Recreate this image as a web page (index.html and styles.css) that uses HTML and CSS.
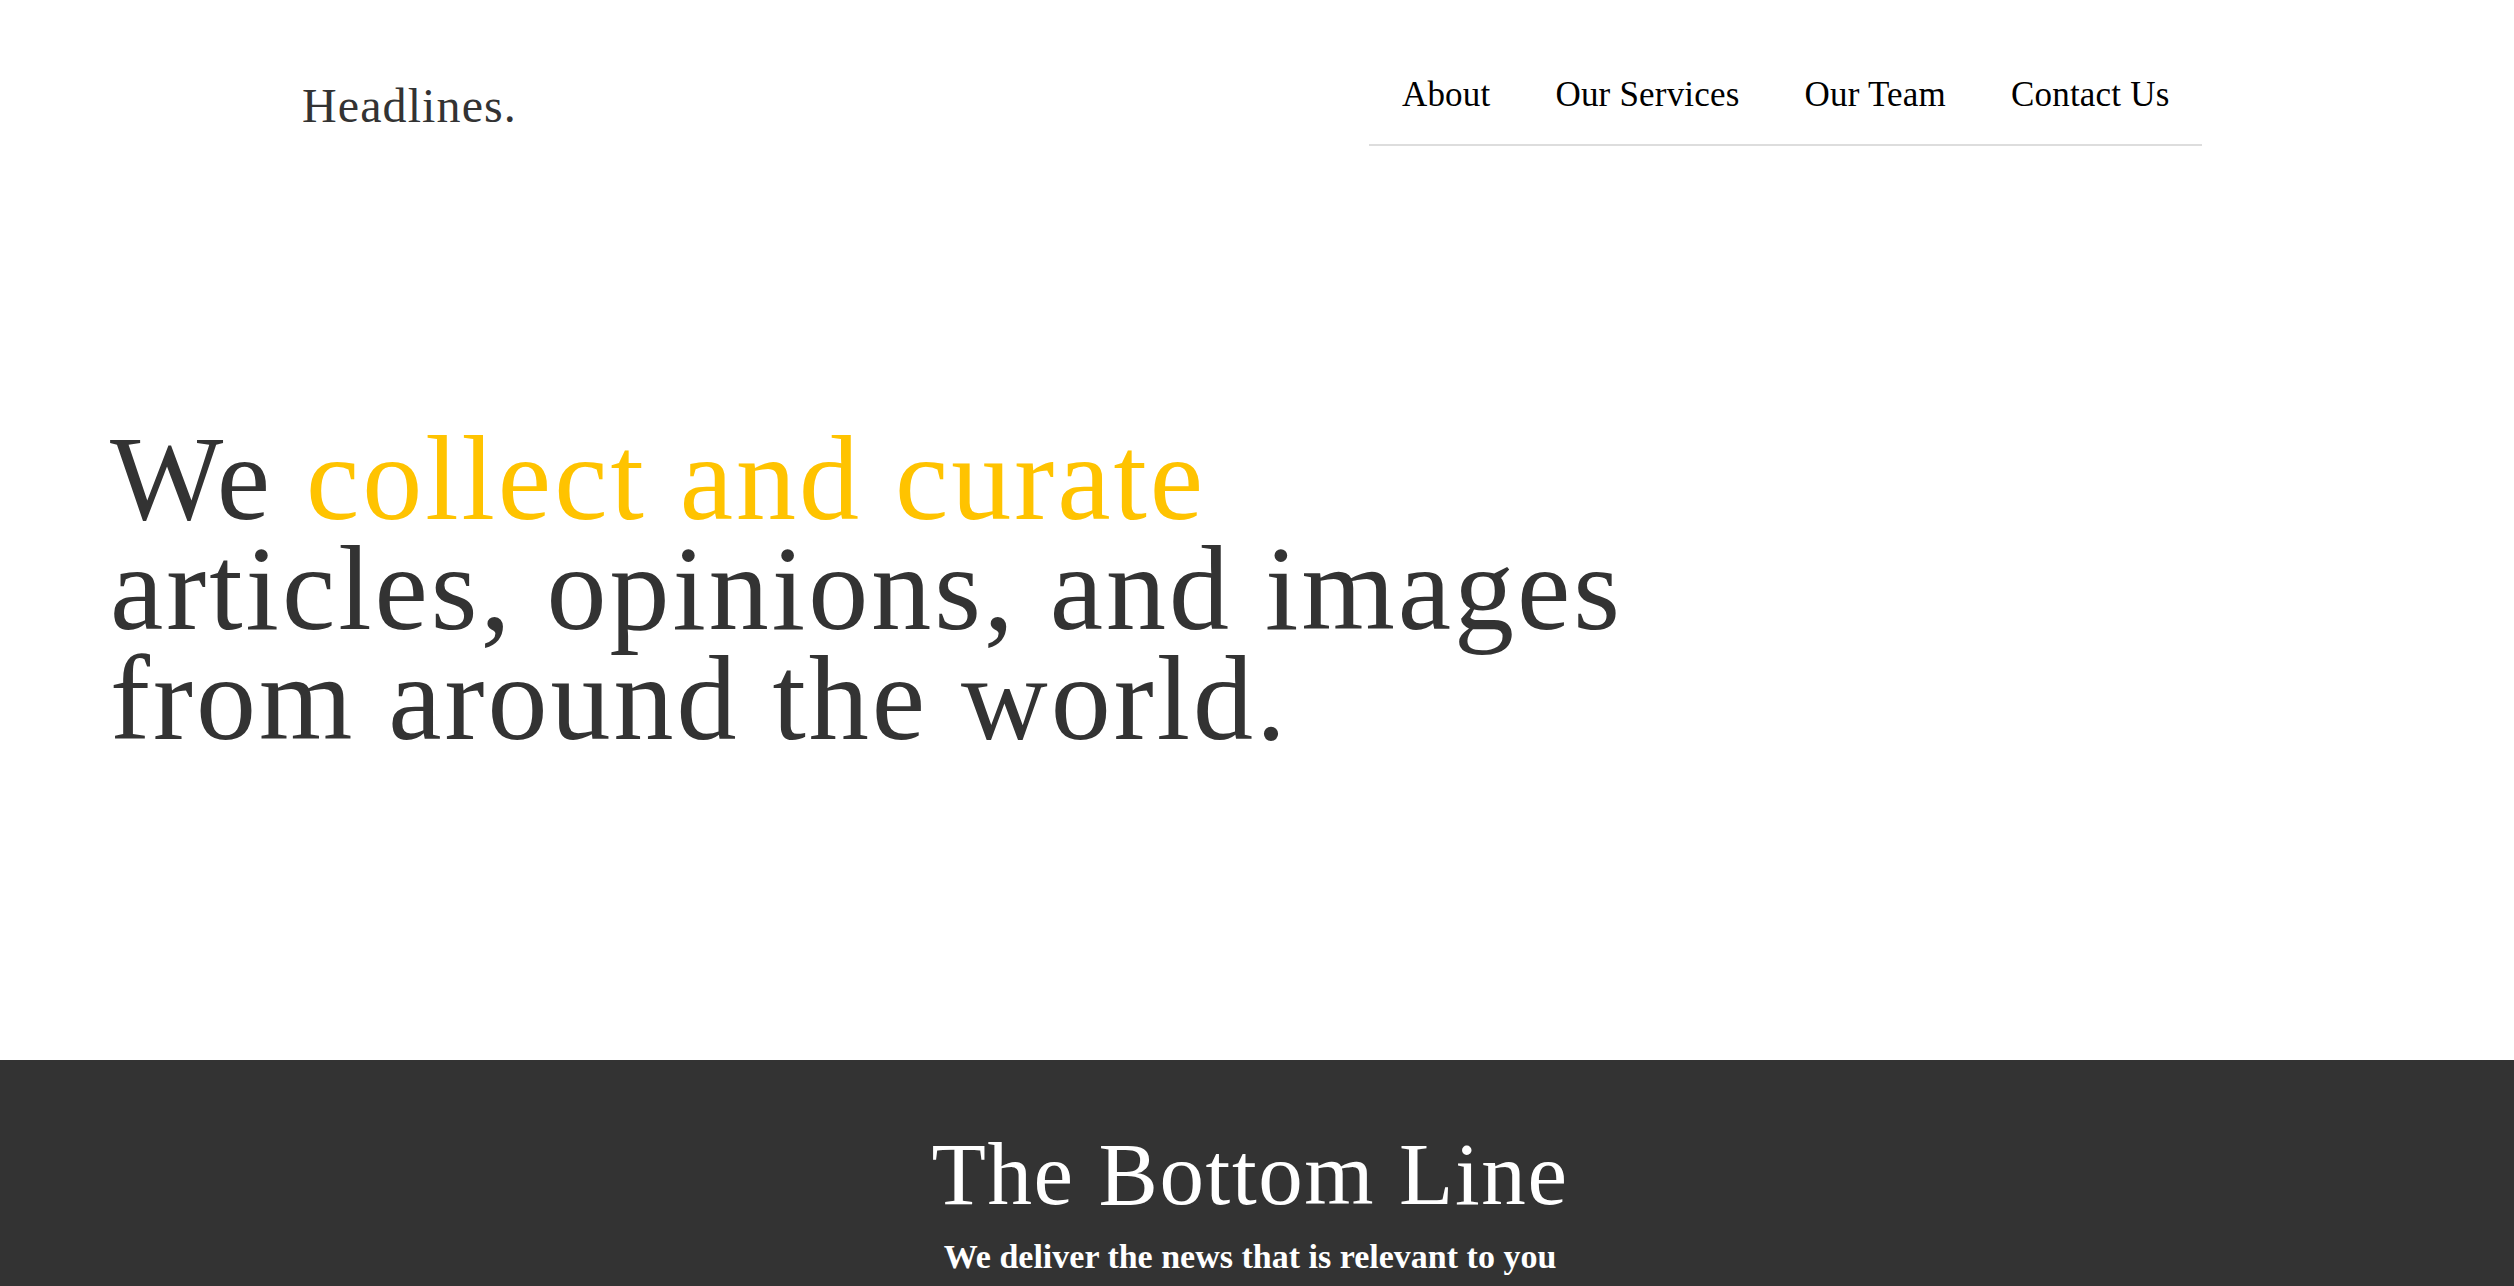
FILE: index.html
```html
<!DOCTYPE html>
<html lang="en">
<head>
<meta charset="utf-8">
<title>Headlines.</title>
<link rel="stylesheet" href="styles.css">
</head>
<body>
<header class="site-header">
  <div class="logo">Headlines.</div>
  <nav class="nav">
    <a class="nav-link" href="#">About</a>
    <a class="nav-link" href="#">Our Services</a>
    <a class="nav-link" href="#">Our Team</a>
    <a class="nav-link" href="#">Contact Us</a>
  </nav>
</header>
<section class="hero">
  <h1 class="hero-title">We <span class="accent">collect and curate</span><br>articles, opinions, and images<br>from around the world.</h1>
</section>
<section class="bottom-line">
  <h2 class="bl-title">The Bottom Line</h2>
  <p class="bl-sub">We deliver the news that is relevant to you</p>
</section>
</body>
</html>
```
FILE: styles.css
```css
html, body {
  margin: 0;
  padding: 0;
  background: #ffffff;
}
body {
  font-family: "Liberation Serif", "Times New Roman", serif;
  color: #333333;
}
.site-header {
  display: flex;
  justify-content: space-between;
  align-items: flex-start;
  padding: 0 312px 0 302px;
}
.logo {
  margin-top: 82px;
  font-size: 48px;
  line-height: 1;
  letter-spacing: 1.1px;
  color: #333333;
}
.nav {
  display: flex;
  margin-top: 77px;
  border-bottom: 2px solid #dddddd;
}
.nav-link {
  display: block;
  padding: 0 32.5px 32px;
  font-size: 35px;
  line-height: 1;
  letter-spacing: 0.2px;
  color: #000000;
  text-decoration: none;
}
.hero {
  padding: 278px 0 306px 110px;
}
.hero-title {
  margin: 0;
  font-size: 120px;
  line-height: 110px;
  font-weight: 400;
  letter-spacing: 3px;
  color: #333333;
}
.accent {
  color: #ffc300;
}
.bottom-line {
  background: #333333;
  color: #ffffff;
  text-align: center;
  padding: 70px 14px 80px 0;
}
.bl-title {
  margin: 0;
  font-size: 89px;
  line-height: 1;
  font-weight: 400;
  letter-spacing: 1.6px;
}
.bl-sub {
  margin: 21px 0 0;
  font-size: 34px;
  line-height: 1;
  font-weight: 700;
}
```
